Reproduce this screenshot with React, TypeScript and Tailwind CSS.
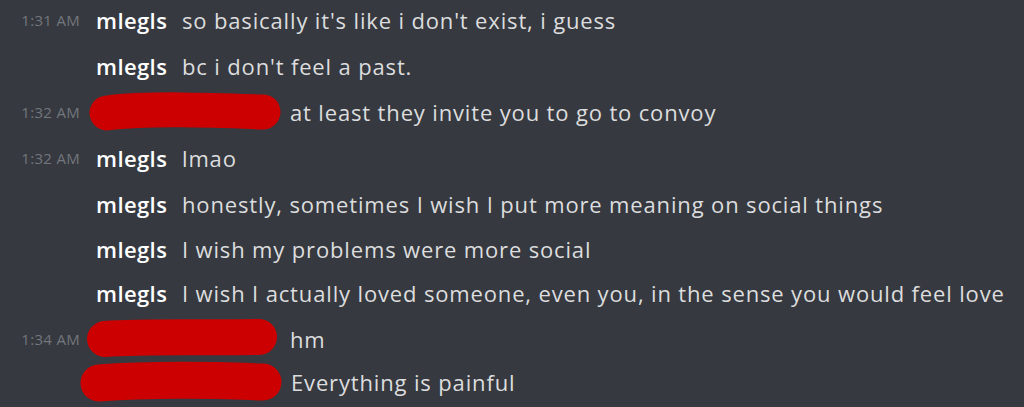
const rows = [
  { time: '1:31 AM', name: 'mlegls', text: "so basically it's like i don't exist, i guess", h: 'h-[46px]' },
  { time: '', name: 'mlegls', text: "bc i don't feel a past.", h: 'h-[46px]' },
  { time: '1:32 AM', name: '', text: 'at least they invite you to go to convoy', h: 'h-[46px]', scribble: 1 },
  { time: '1:32 AM', name: 'mlegls', text: 'lmao', h: 'h-[46px]' },
  { time: '', name: 'mlegls', text: 'honestly, sometimes I wish I put more meaning on social things', h: 'h-[46px]' },
  { time: '', name: 'mlegls', text: 'I wish my problems were more social', h: 'h-[44px]' },
  { time: '', name: 'mlegls', text: 'I wish I actually loved someone, even you, in the sense you would feel love', h: 'h-[45px]' },
  { time: '1:34 AM', name: '', text: 'hm', h: 'h-[46px]', scribble: 2 },
  { time: '', name: '', text: 'Everything is painful', h: 'h-[40px]', scribble: 3 },
]

function Scribble({ kind }: { kind: number }) {
  // red marker strokes covering the usernames
  if (kind === 1)
    return (
      <svg width="194" height="42" viewBox="0 0 194 42" className="ml-[8px] shrink-0">
        <path d="M19 22 C60 17 120 19 175 21" stroke="#cc0000" strokeWidth="35" strokeLinecap="round" fill="none" />
      </svg>
    )
  if (kind === 2)
    return (
      <svg width="194" height="42" viewBox="0 0 194 42" className="ml-[6px] shrink-0">
        <path d="M19 21 C60 18 120 20 173 19" stroke="#cc0000" strokeWidth="36" strokeLinecap="round" fill="none" />
      </svg>
    )
  return (
    <svg width="204" height="42" viewBox="0 0 204 42" className="ml-0 shrink-0">
      <path d="M19 22 C70 18 130 19 183 21" stroke="#cc0000" strokeWidth="37" strokeLinecap="round" fill="none" />
    </svg>
  )
}

export default function App() {
  return (
    <div
      className="w-[1024px] h-[407px] overflow-hidden bg-[#36393f]"
      style={{ fontFamily: '"Open Sans", "Noto Sans", sans-serif' }}
    >
      <div className="-mt-[3px] flex flex-col">
        {rows.map((r, i) => (
          <div key={i} className={`flex items-center ${r.h}`}>
            <div className="w-[80px] shrink-0 text-right text-[15px] tracking-[0.3px] text-[#72767d]">{r.time}</div>
            {r.scribble ? (
              <div className="flex items-center">
                <Scribble kind={r.scribble} />
              </div>
            ) : (
              <div className="ml-[16px] w-[72px] shrink-0 text-[22px] font-semibold tracking-[0.4px] text-white">
                {r.name}
              </div>
            )}
            <div
              className={`${
                r.scribble === 1 ? 'ml-[8px]' : r.scribble === 2 ? 'ml-[10px]' : r.scribble === 3 ? 'ml-[7px]' : 'ml-[14px]'
              } whitespace-nowrap text-[22px] tracking-[0.85px] text-[#dcddde]`}
            >
              {r.text}
            </div>
          </div>
        ))}
      </div>
    </div>
  )
}
